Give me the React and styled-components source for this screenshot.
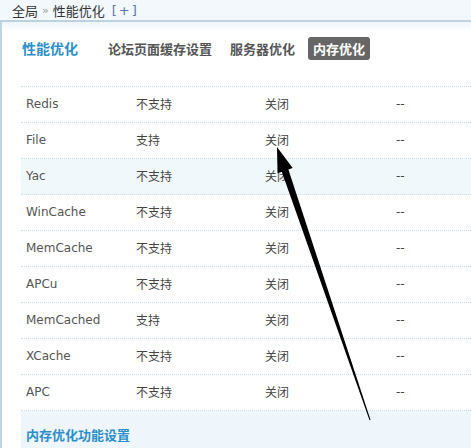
import styled, { createGlobalStyle } from 'styled-components'

const GlobalStyle = createGlobalStyle`
  html, body {
    margin: 0;
    padding: 0;
    background: #fff;
  }
  body {
    font-family: "DejaVu Sans", "Noto Sans CJK SC", sans-serif;
    font-size: 12px;
    color: #444;
  }
`

const Page = styled.div`
  position: relative;
  width: 471px;
  height: 448px;
  overflow: hidden;
`

const Crumbs = styled.div`
  height: 20px;
  display: flex;
  align-items: center;
  padding-left: 12px;
  gap: 4px;
  background: #f2f8fc;
  border-bottom: 2px solid #bcd3df;
  font-size: 13px;
  color: #333;
`

const Sep = styled.span`
  color: #999;
  font-size: 11px;
`

const Plus = styled.span`
  color: #5a76a8;
  margin-left: 3px;
  letter-spacing: 2px;
`

const Main = styled.div`
  border-left: 2px solid #bdd5e2;
  padding-left: 19px;
  height: 426px;
  background: linear-gradient(#eef5fb, #fff 10px);
`

const TitleRow = styled.div`
  display: flex;
  align-items: center;
  height: 20px;
  padding-top: 16px;
`

const Title = styled.h3`
  margin: 0 0 0 1px;
  font-size: 14px;
  font-weight: bold;
  color: #2b8fcb;
  width: 81px;
`

const Tab = styled.span`
  font-size: 13px;
  font-weight: bold;
  padding: 2px 5px;
  margin-right: 8px;
  border-radius: 3px;
  color: ${p => (p.$active ? '#fff' : '#555')};
  background: ${p => (p.$active ? '#666' : 'transparent')};
`

const Table = styled.div`
  margin-top: 28px;
  border-top: 1px dotted #c6dfec;
`

const Row = styled.div`
  display: grid;
  grid-template-columns: 110px 129px 131px 1fr;
  height: 35px;
  align-items: center;
  border-bottom: 1px dotted #c6dfec;
  background: ${p => (p.$hl ? '#f1f8fc' : 'transparent')};
`

const Cell = styled.div`
  padding-left: 5px;
  padding-bottom: 2px;
  color: ${p => (p.$name ? '#555' : '#444')};
`

const SectionHead = styled.div`
  height: 38px;
  display: flex;
  align-items: center;
  padding: 4px 0 0 5px;
  background: #eef5fb;
  font-size: 13px;
  font-weight: bold;
  color: #2b8fcb;
`

const Arrow = styled.svg`
  position: absolute;
  left: 0;
  top: 0;
  pointer-events: none;
`

const rows = [
  ['Redis', '不支持'],
  ['File', '支持'],
  ['Yac', '不支持', true],
  ['WinCache', '不支持'],
  ['MemCache', '不支持'],
  ['APCu', '不支持'],
  ['MemCached', '支持'],
  ['XCache', '不支持'],
  ['APC', '不支持'],
]

export default function App() {
  return (
    <Page>
      <GlobalStyle />
      <Crumbs>
        <span>全局</span>
        <Sep>»</Sep>
        <span>性能优化</span>
        <Plus>[+]</Plus>
      </Crumbs>
      <Main>
        <TitleRow>
          <Title>性能优化</Title>
          <Tab>论坛页面缓存设置</Tab>
          <Tab>服务器优化</Tab>
          <Tab $active>内存优化</Tab>
        </TitleRow>
        <Table>
          {rows.map(([name, support, hl]) => (
            <Row key={name} $hl={hl}>
              <Cell $name>{name}</Cell>
              <Cell>{support}</Cell>
              <Cell>关闭</Cell>
              <Cell>--</Cell>
            </Row>
          ))}
        </Table>
        <SectionHead>内存优化功能设置</SectionHead>
      </Main>
      <Arrow width="471" height="448" viewBox="0 0 471 448">
        <polygon
          points="277,147 292.7,168 288.4,169.5 370.5,419.8 369.5,420.2 281.8,171.7 277.5,173.2"
          fill="#000"
        />
      </Arrow>
    </Page>
  )
}
